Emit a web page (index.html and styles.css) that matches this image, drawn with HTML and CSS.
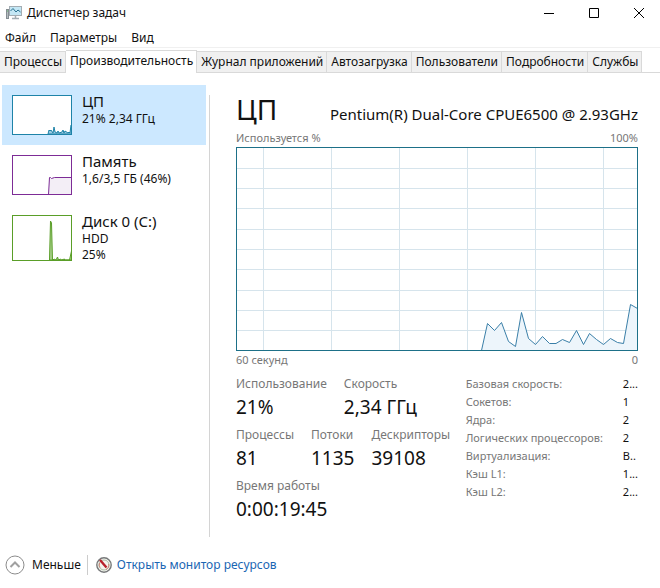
FILE: index.html
```html
<!DOCTYPE html>
<html lang="ru">
<head>
<meta charset="utf-8">
<title>Диспетчер задач</title>
<link rel="stylesheet" href="styles.css">
</head>
<body>
<div class="window">
  <header class="titlebar">
    <svg class="app-icon" width="16" height="16" viewBox="0 0 16 16" aria-hidden="true">
      <rect x="0.5" y="4.500" width="2" height="9" fill="#b5bcc0" stroke="#858d92"/>
      <path d="M1 6h1" stroke="#62b36a"/>
      <rect x="3.500" y="1.500" width="12" height="9" fill="#c4e7f5" stroke="#a3adb3"/>
      <path d="M4.500 6L7 3.500l3 3.500 2-2 2.500 2" fill="none" stroke="#28718f"/>
      <path d="M9.500 11v2M6 13.500h7" stroke="#a3adb3" stroke-width="1.500"/>
    </svg>
    <h1 class="window-title">Диспетчер задач</h1>
    <div class="window-controls">
      <button class="control" aria-label="Свернуть"><svg width="12" height="12" viewBox="0 0 12 12"><path d="M1 6.500h10"/></svg></button>
      <button class="control" aria-label="Развернуть"><svg width="12" height="12" viewBox="0 0 12 12"><path d="M1.500 1.500h9v9h-9z"/></svg></button>
      <button class="control" aria-label="Закрыть"><svg width="12" height="12" viewBox="0 0 12 12"><path d="M1 1l10 10M11 1L1 11"/></svg></button>
    </div>
  </header>
  <nav class="menu">
    <button class="menu-item">Файл</button>
    <button class="menu-item">Параметры</button>
    <button class="menu-item">Вид</button>
  </nav>
  <div class="tabs" role="tablist">
    <button class="tab" role="tab">Процессы</button>
    <button class="tab tab-active" role="tab" aria-selected="true">Производительность</button>
    <button class="tab" role="tab">Журнал приложений</button>
    <button class="tab" role="tab">Автозагрузка</button>
    <button class="tab" role="tab">Пользователи</button>
    <button class="tab" role="tab">Подробности</button>
    <button class="tab" role="tab">Службы</button>
  </div>
  <div class="content">
    <aside class="sidebar">
      <button class="resource resource-active">
        <svg class="thumb thumb-cpu" width="60" height="40" viewBox="0 0 60 40" aria-hidden="true">
          <path d="M36 39l1-4 1 1 1-1 2 3 1-6 1 5 2 1 1-2 1 2 3-1 1-2 1 3 1-2 3 2 1-1 1 1 1-8 1 1v8z"/>
          <rect x="0.500" y="0.500" width="59" height="39"/>
        </svg>
        <span class="resource-text"><span class="resource-name">ЦП</span><span class="resource-detail">21% 2,34 ГГц</span></span>
      </button>
      <button class="resource">
        <svg class="thumb thumb-memory" width="60" height="40" viewBox="0 0 60 40" aria-hidden="true">
          <path d="M36.500 39.500l1-17 1 0 1 1 3-1h17v17z"/>
          <rect x="0.500" y="0.500" width="59" height="39"/>
        </svg>
        <span class="resource-text"><span class="resource-name">Память</span><span class="resource-detail">1,6/3,5 ГБ (46%)</span></span>
      </button>
      <button class="resource">
        <svg class="thumb thumb-disk" width="60" height="46" viewBox="0 0 60 46" aria-hidden="true">
          <path d="M37.500 45l1-39 1 2 1 37 2-1 1 1 1-1 1-2 1 3 2-1 1 1 3-1v1h5l2-9v9z"/>
          <rect x="0.500" y="0.500" width="59" height="45"/>
        </svg>
        <span class="resource-text"><span class="resource-name">Диск 0 (C:)</span><span class="resource-detail">HDD</span><span class="resource-detail">25%</span></span>
      </button>
    </aside>
    <main class="details">
      <div class="heading">
        <h2 class="heading-title">ЦП</h2>
        <span class="heading-model">Pentium(R) Dual-Core CPUE6500 @ 2.93GHz</span>
      </div>
      <div class="axis axis-top"><span>Используется %</span><span>100%</span></div>
      <svg class="chart" viewBox="0 0 402 204" preserveAspectRatio="none" role="img" aria-label="Использование ЦП">
        <path class="grid-lines" d="M27.500 0v204M95.500 0v204M163.500 0v204M231.500 0v204M299.500 0v204M367.500 0v204M0 21.500h402M0 41.500h402M0 61.500h402M0 82.500h402M0 102.500h402M0 122.500h402M0 143.500h402M0 163.500h402M0 183.500h402"/>
        <path class="load" d="M245.500 203.500L251.500 176.500 258.500 183.500 265.500 175.500 272.500 194.500 279.500 199.500 285.500 165.500 292.500 191.500 299.500 197.500 306.500 189.500 313.500 196.500H320L326.500 192.500 333.500 195.500 340.500 183.500 347.500 197.500 353.500 186.500 360.500 192.500 367.500 197.500 374.500 191.500 381.500 195.500 387.500 196.500 394.500 157.500 401.500 161.500V203.500z"/>
        <rect class="chart-frame" x="0.500" y="0.500" width="401" height="203"/>
      </svg>
      <div class="axis axis-bottom"><span>60 секунд</span><span>0</span></div>
      <div class="stats">
        <div class="counters">
          <dl class="counter-row">
            <div class="counter"><dt>Использование</dt><dd>21%</dd></div>
            <div class="counter"><dt>Скорость</dt><dd>2,34 ГГц</dd></div>
          </dl>
          <dl class="counter-row">
            <div class="counter"><dt>Процессы</dt><dd>81</dd></div>
            <div class="counter"><dt>Потоки</dt><dd>1135</dd></div>
            <div class="counter"><dt>Дескрипторы</dt><dd>39108</dd></div>
          </dl>
          <dl class="counter-row">
            <div class="counter"><dt>Время работы</dt><dd>0:00:19:45</dd></div>
          </dl>
        </div>
        <table class="specs">
          <tr><th scope="row">Базовая скорость:</th><td>2...</td></tr>
          <tr><th scope="row">Сокетов:</th><td>1</td></tr>
          <tr><th scope="row">Ядра:</th><td>2</td></tr>
          <tr><th scope="row">Логических процессоров:</th><td>2</td></tr>
          <tr><th scope="row">Виртуализация:</th><td>В..</td></tr>
          <tr><th scope="row">Кэш L1:</th><td>1...</td></tr>
          <tr><th scope="row">Кэш L2:</th><td>2...</td></tr>
        </table>
      </div>
    </main>
  </div>
  <footer class="footer">
    <button class="less">
      <svg width="20" height="20" viewBox="0 0 20 20" aria-hidden="true"><circle cx="10" cy="10" r="9" fill="#fff" stroke="#8c8c8c"/><path d="M5.500 12L10 7.500l4.500 4.500" fill="none" stroke="#a0a0a0" stroke-width="2"/></svg>
      <span>Меньше</span>
    </button>
    <a class="monitor" href="#monitor">
      <svg width="16" height="16" viewBox="0 0 16 16" aria-hidden="true"><circle cx="8" cy="8" r="7.200" fill="#f3f3ee" stroke="#77797a" stroke-width="1.400"/><circle cx="8" cy="8" r="5" fill="none" stroke="#a9bda5"/><path d="M4 10.500A5 5 0 0 1 3.500 6M10 12.500A5 5 0 0 0 12.700 7" fill="none" stroke="#cf8177"/><path d="M4 3l6.500 7.500" stroke="#b7202b" stroke-width="2.400"/></svg>
      <span>Открыть монитор ресурсов</span>
    </a>
  </footer>
</div>
</body>
</html>
```
FILE: styles.css
```css
* { box-sizing: border-box; }
body {
  margin: 0;
  background: #fff;
  color: #111;
  font: 12px/16px "Noto Sans", "Open Sans", sans-serif;
}
button {
  margin: 0;
  padding: 0;
  border: 0;
  background: none;
  color: inherit;
  font: inherit;
  text-align: left;
}
h1, h2, dl, dd { margin: 0; font-weight: 400; }
svg { display: block; flex-shrink: 0; }
.window { display: flex; flex-direction: column; min-height: 100vh; }

.titlebar { display: flex; align-items: center; height: 26px; padding-left: 6px; gap: 5px; }
.window-title { flex: 1; font-size: 12px; }
.window-controls { display: flex; gap: 3px; }
.control { display: flex; align-items: center; justify-content: center; width: 42px; height: 24px; }
.control path { fill: none; stroke: #000; }

.menu { display: flex; gap: 14px; height: 22px; padding: 3px 5px 0; border-bottom: 1px solid #f0f0f0; }

.tabs { display: flex; align-items: flex-end; height: 25px; border-bottom: 1px solid #d9d9d9; white-space: nowrap; }
.tab {
  height: 21px;
  padding: 0 3px 0 4px;
  border: 1px solid #d9d9d9;
  border-width: 1px 1px 0 0;
  background: #f0f0f0;
}
.tab-active { height: 23px; margin-bottom: -1px; padding-bottom: 2px; background: #fff; }

.content { display: flex; flex: 1; padding: 12px 22px 0 2px; }
.sidebar { flex: 0 0 204px; }
.resource { display: flex; width: 100%; min-height: 60px; padding: 10px 10px 0; gap: 10px; }
.resource-active { background: #cce8ff; }
.resource-text { display: flex; flex-direction: column; margin-top: -4px; line-height: 16px; }
.resource-name { font-size: 15px; line-height: 20px; }
.thumb rect { fill: none; }
.thumb { background: #fff; }
.thumb-cpu { stroke: #1e83a8; fill: #9bcbe2; }
.thumb-memory { stroke: #7d2c96; fill: #f3eef6; }
.thumb-disk { stroke: #5a9e28; fill: #a8d08a; }

.details {
  flex: 1;
  min-width: 0;
  margin: 10px 0 13px 3px;
  padding-left: 26px;
  border-left: 1px solid #d4d4d4;
}
.heading { display: flex; align-items: baseline; justify-content: space-between; height: 34px; white-space: nowrap; }
.heading-title { font-size: 28px; line-height: 28px; }
.heading-model { font-size: 15px; line-height: 20px; }
.axis { display: flex; justify-content: space-between; height: 18px; color: #777; font-size: 11px; line-height: 18px; }
.chart { width: 100%; height: 204px; }
.grid-lines { fill: none; stroke: #d6e4ec; }
.load { fill: #edf5fb; stroke: #3a7fa8; }
.chart-frame { fill: none; stroke: #1d7088; }

.stats { display: flex; justify-content: space-between; padding-top: 6px; white-space: nowrap; }
.counters { display: grid; gap: 5px; align-content: start; }
.counter-row { display: flex; gap: 17px; }
dt { color: #777; line-height: 18px; }
dd { font-size: 19px; line-height: 28px; }
.specs { border-collapse: collapse; align-self: start; font-size: 11px; line-height: 18px; }
.specs th { padding: 0 20px 0 0; color: #777; font-weight: 400; text-align: left; }
.specs td { padding: 0; }

.footer { display: flex; align-items: center; height: 38px; padding: 0 5px 8px; }
.less { display: flex; align-items: center; gap: 7px; padding-right: 6px; border-right: 1px solid #ccc; line-height: 14px; }
.monitor { display: flex; align-items: center; gap: 5px; padding-left: 8px; color: #1a66b3; text-decoration: none; }
```
